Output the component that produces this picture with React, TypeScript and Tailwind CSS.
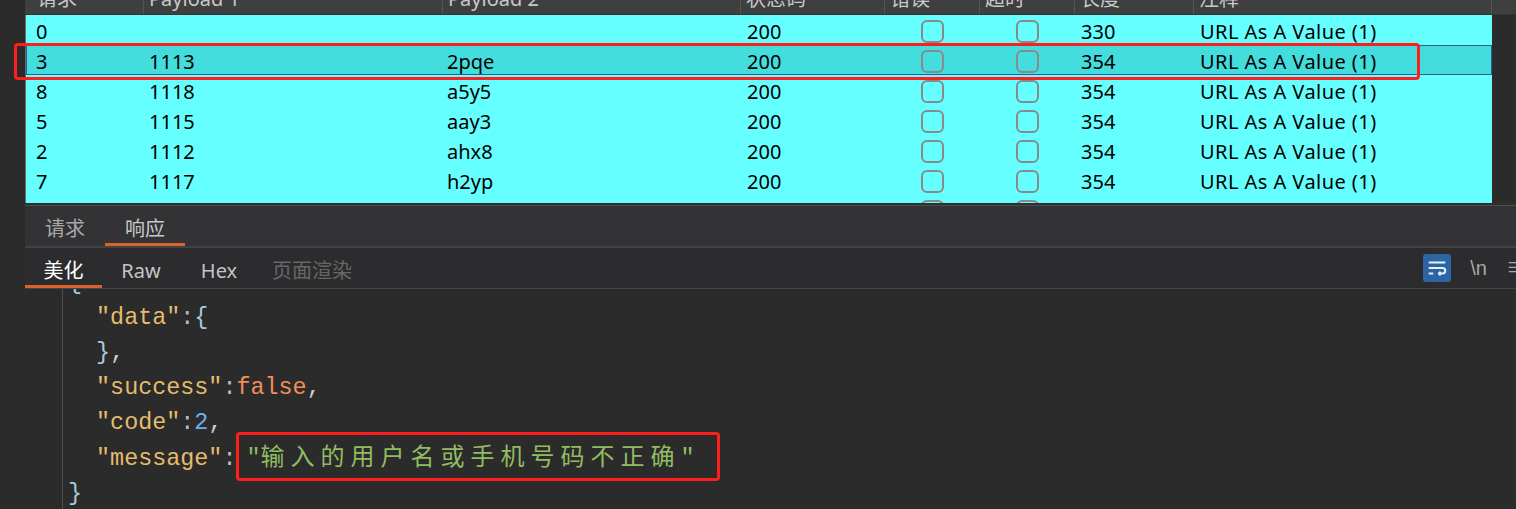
import React from "react";

const cols =
  "grid grid-cols-[118px_299px_298px_144px_95px_95px_119px_298px]";

const rows: string[][] = [
  ["0", "", "", "200", "330"],
  ["3", "1113", "2pqe", "200", "354"],
  ["8", "1118", "a5y5", "200", "354"],
  ["5", "1115", "aay3", "200", "354"],
  ["2", "1112", "ahx8", "200", "354"],
  ["7", "1117", "h2yp", "200", "354"],
  ["4", "1114", "bakd", "200", "354"],
];

const headers = ["请求", "Payload 1", "Payload 2", "状态码", "错误", "超时", "长度", "注释"];

function Check() {
  return <div className="w-[23px] h-[23px] rounded-[6px] border-2 border-[#8a8a8a]" />;
}

export default function App() {
  return (
    <div className="w-[1516px] h-[509px] overflow-hidden bg-[#2b2b2b] flex relative font-['Noto_Sans','Noto_Sans_CJK_SC',sans-serif]">
      <div className="w-[25px] shrink-0 bg-[#2b2b2b]" />
      <div className="flex-1 flex flex-col min-w-0">
        {/* results table */}
        <div className="h-[203px] overflow-hidden flex flex-col shrink-0">
          <div className="mt-[-16px] h-[31px] shrink-0 flex bg-[#3f3f3f] border-b border-[#333]">
            <div className="w-[1px]" />
            <div className={`${cols} text-[20px] leading-[30px] text-[#c8c8c8]`}>
              {headers.map((h, i) => (
                <div key={i} className={`border-r border-[#555] ${i === 0 ? "pl-[11px]" : "pl-[5px]"}`}>
                  {h}
                </div>
              ))}
            </div>
            <div className="flex-1" />
          </div>
          <div className="flex flex-1">
            <div className="w-[1px] bg-[#6a6a6a]" />
            <div className="bg-[#66ffff] flex flex-col">
              {rows.map((r, i) => (
                <div
                  key={i}
                  className={`${cols} h-[30px] shrink-0 items-center text-[20px] text-black ${
                    i === 1 ? "bg-[#44dddd] shadow-[inset_0_0_0_1px_#2d5c9a]" : ""
                  }`}
                >
                  <div className="pl-[10px] pt-[2px]">{r[0]}</div>
                  <div className="pl-[5px] pt-[2px]">{r[1]}</div>
                  <div className="pl-[4px] pt-[2px]">{r[2]}</div>
                  <div className="pl-[6px] pt-[2px]">{r[3]}</div>
                  <div className="flex justify-center">
                    <Check />
                  </div>
                  <div className="flex justify-center">
                    <Check />
                  </div>
                  <div className="pl-[6px] pt-[2px]">{r[4]}</div>
                  <div className="pl-[6px] pt-[2px] tracking-[0.45px]">URL As A Value (1)</div>
                </div>
              ))}
            </div>
            <div className="flex-1 bg-[#2b2b2b]" />
          </div>
        </div>
        <div className="h-[2px] bg-[#2f2f2f] shrink-0" />
        <div className="h-[1px] bg-[#4d4d4d] shrink-0" />
        {/* top tabs */}
        <div className="h-[40px] shrink-0 bg-[#333335] flex items-stretch text-[20px]">
          <div className="w-[80px] flex items-center justify-center text-[#a8a8a8] pt-[5px]">请求</div>
          <div className="w-[80px] flex items-center justify-center text-[#c8c8c8] border-b-[3px] border-[#d9632c] pt-[8px]">
            响应
          </div>
        </div>
        <div className="h-[2px] bg-[#424244] shrink-0" />
        {/* sub tabs */}
        <div className="h-[41px] shrink-0 bg-[#2c2c2e] flex items-stretch text-[20px] border-b border-[#454545]">
          <div className="w-[77px] flex items-center justify-center text-white border-b-[3px] border-[#d9632c] pt-[8px]">
            美化
          </div>
          <div className="w-[78px] flex items-center justify-center text-[#c4c4c4] pt-[5px]">Raw</div>
          <div className="w-[78px] flex items-center justify-center text-[#c4c4c4] pt-[5px]">Hex</div>
          <div className="w-[108px] flex items-center justify-center text-[#666666] pt-[5px]">页面渲染</div>
          <div className="flex-1" />
          <div className="flex items-center gap-[19px] mr-[-10px]">
            <div className="w-[28px] h-[28px] rounded-[3px] bg-[#2b65a3] flex items-center justify-center">
              <svg width="22" height="22" viewBox="0 0 24 24" fill="none" stroke="#e8eef6" strokeWidth="2.2" strokeLinecap="butt" strokeLinejoin="round">
                <path d="M3 6h18" />
                <path d="M3 12h15a3 3 0 1 1 0 6h-4" />
                <polyline points="16 16 14 18 16 20" />
                <path d="M3 18h5" />
              </svg>
            </div>
            <div className="text-[#a8a8a8] text-[20px] font-['Liberation_Sans',sans-serif]">\n</div>
            <div className="text-[#a8a8a8] text-[20px]">≡</div>
          </div>
        </div>
        {/* code */}
        <div className="flex-1 flex min-h-0 overflow-hidden bg-[#2b2b2b]">
          <div className="w-[38px] shrink-0 border-r border-[#4e4e4e]" />
          <div className="mt-[-23px] pl-[5px] font-['Liberation_Mono','Noto_Sans_CJK_SC',monospace] text-[23.4px] leading-[35px] whitespace-pre">
            <div className="text-[#a9c7de]">{"{"}</div>
            <div>
              {"  "}
              <span className="text-[#e4bc6c]">"data"</span>
              <span className="text-[#bbbbbb]">:</span>
              <span className="text-[#a9c7de]">{"{"}</span>
            </div>
            <div>
              {"  "}
              <span className="text-[#a9c7de]">{"}"}</span>
              <span className="text-[#cccccc]">,</span>
            </div>
            <div>
              {"  "}
              <span className="text-[#e4bc6c]">"success"</span>
              <span className="text-[#bbbbbb]">:</span>
              <span className="text-[#ee8f58]">false</span>
              <span className="text-[#cccccc]">,</span>
            </div>
            <div>
              {"  "}
              <span className="text-[#e4bc6c]">"code"</span>
              <span className="text-[#bbbbbb]">:</span>
              <span className="text-[#6cb2ea]">2</span>
              <span className="text-[#cccccc]">,</span>
            </div>
            <div>
              {"  "}
              <span className="text-[#e4bc6c]">"message"</span>
              <span className="text-[#bbbbbb]">:</span>
              <span className="text-[#8fbd60] ml-[10px]">
                "<span className="tracking-[6px] text-[24px]">输入的用户名或手机号码不正确</span>"
              </span>
            </div>
            <div className="text-[#a9c7de]">{"}"}</div>
          </div>
        </div>
      </div>
      {/* annotation boxes */}
      <div className="absolute left-[14px] top-[43px] w-[1406px] h-[37px] border-[3px] border-[#ff1e1e] rounded-[4px]" />
      <div className="absolute left-[236px] top-[432px] w-[484px] h-[49px] border-[3px] border-[#ff1e1e] rounded-[4px]" />
    </div>
  );
}
